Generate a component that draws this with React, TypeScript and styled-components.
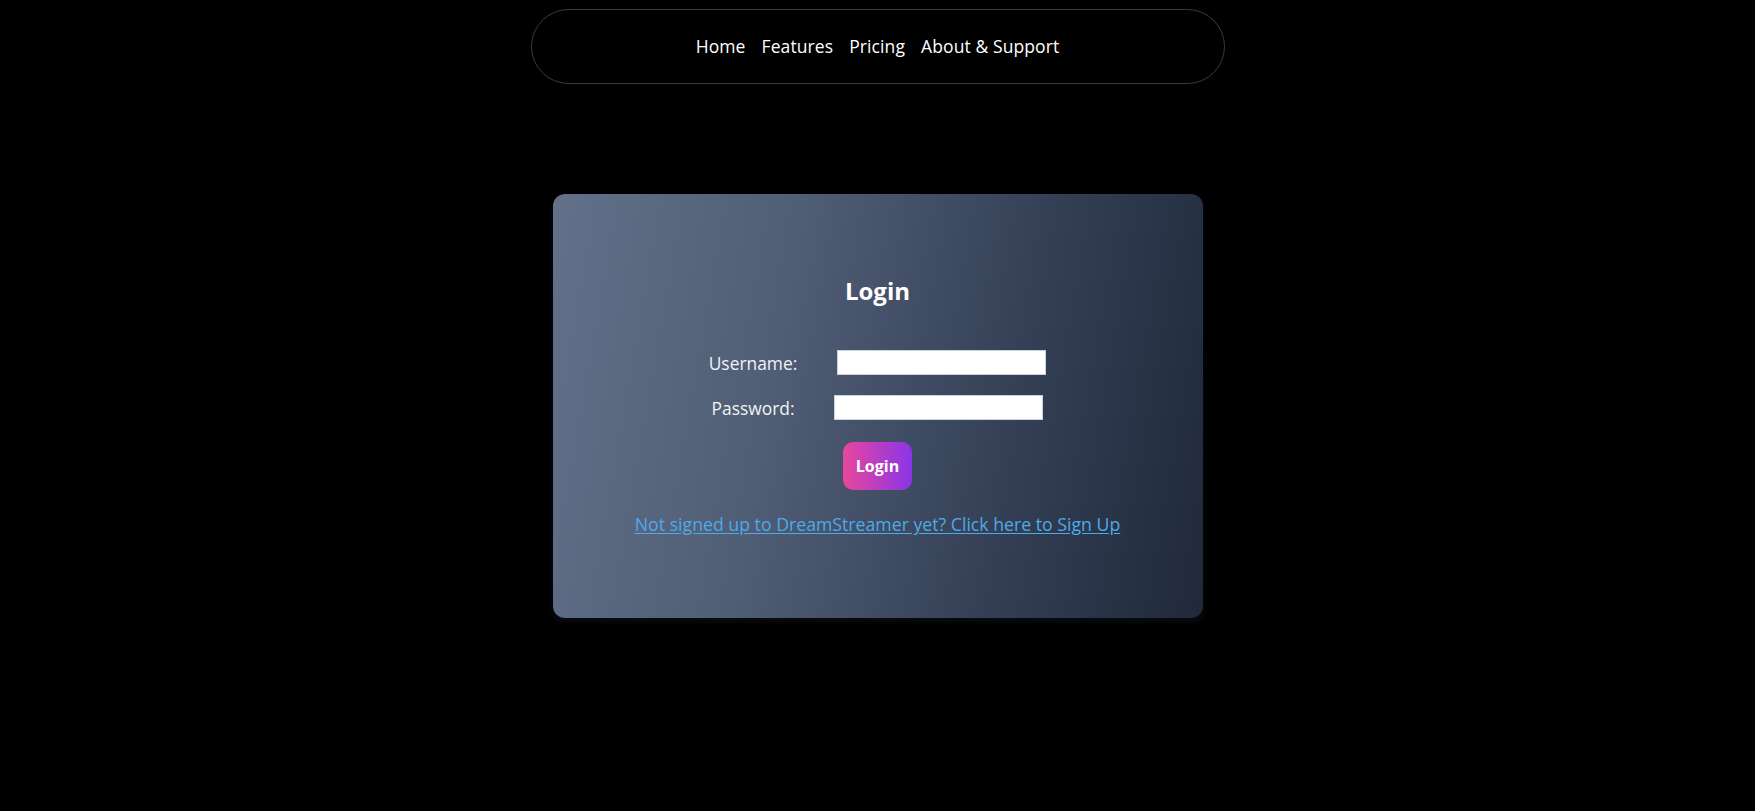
import React from "react";
import styled, { createGlobalStyle } from "styled-components";

const Global = createGlobalStyle`
  html, body {
    margin: 0;
    padding: 0;
    background: #000;
  }
  body {
    font-family: "Open Sans", "Liberation Sans", sans-serif;
    color: #fff;
  }
  * { box-sizing: border-box; }
`;

const Page = styled.div`
  min-height: 100vh;
  background: #000;
  display: flex;
  flex-direction: column;
  align-items: center;
  padding-top: 9px;
`;

const Nav = styled.nav`
  width: 694px;
  height: 75px;
  border: 1px solid #3a3a3a;
  border-radius: 38px;
  display: flex;
  align-items: center;
  justify-content: center;
  gap: 16px;
  padding-bottom: 1px;
`;

const NavLink = styled.a`
  color: #fff;
  text-decoration: none;
  font-size: 17.5px;
  font-weight: 400;
  letter-spacing: 0.1px;
  cursor: pointer;
`;

const Card = styled.section`
  margin-top: 110px;
  width: 650px;
  height: 424px;
  border-radius: 12px;
  background: linear-gradient(100deg, #627089 0%, #4f5d75 35%, #343f55 70%, #1f293a 100%);
  box-shadow: 0 4px 6px rgba(30, 40, 60, 0.3);
  display: flex;
  flex-direction: column;
  align-items: center;
  justify-content: center;
  padding-bottom: 3px;
`;

const Title = styled.h2`
  margin: 0 0 41px;
  font-size: 24px;
  line-height: 36px;
  font-weight: 700;
  color: #fff;
`;

const Row = styled.div<{ $last?: boolean }>`
  display: flex;
  align-items: center;
  justify-content: center;
  margin-bottom: ${(p) => (p.$last ? "22px" : "20px")};
`;

const Label = styled.label`
  font-size: 17.4px;
  color: #f1f3f6;
  margin-right: 40px;
`;

const Input = styled.input`
  width: 209px;
  height: 25px;
  border: 1px solid #c9d3e0;
  background: #fff;
  padding: 2px 4px;
  font-family: inherit;
  outline: none;
`;

const Button = styled.button`
  width: 69px;
  height: 48px;
  border: none;
  border-radius: 10px;
  background: linear-gradient(to right, #e8479c, #8a35e8);
  color: #fff;
  font-family: inherit;
  font-weight: 700;
  font-size: 16px;
  cursor: pointer;
  margin-bottom: 22px;
`;

const SignUp = styled.a`
  color: #4eaae8;
  font-size: 17.7px;
  line-height: 24px;
  text-decoration: underline;
  text-underline-offset: 2px;
  cursor: pointer;
`;

export default function App() {
  return (
    <>
      <Global />
      <Page>
        <Nav>
          <NavLink>Home</NavLink>
          <NavLink>Features</NavLink>
          <NavLink>Pricing</NavLink>
          <NavLink>About &amp; Support</NavLink>
        </Nav>
        <Card>
          <Title>Login</Title>
          <Row>
            <Label>Username:</Label>
            <Input type="text" />
          </Row>
          <Row $last>
            <Label>Password:</Label>
            <Input type="password" />
          </Row>
          <Button>Login</Button>
          <SignUp>Not signed up to DreamStreamer yet? Click here to Sign Up</SignUp>
        </Card>
      </Page>
    </>
  );
}
